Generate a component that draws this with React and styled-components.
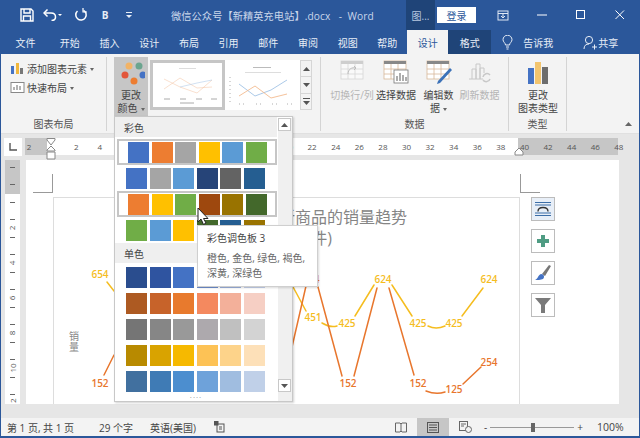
import React from 'react'
import styled, { createGlobalStyle } from 'styled-components'

const FONT = `"Open Sans", "Noto Sans CJK SC", sans-serif`
const BLUE = '#2b579a'

const Global = createGlobalStyle`
  html, body { margin: 0; padding: 0; background: #e6e6e6; }
  * { box-sizing: border-box; }
`

const SCHEMES = [
  ['#4472c4', '#ed7d31', '#a5a5a5', '#ffc000', '#5b9bd5', '#70ad47'],
  ['#4472c4', '#a5a5a5', '#5b9bd5', '#264478', '#636363', '#255e91'],
  ['#ed7d31', '#ffc000', '#70ad47', '#9e480e', '#997300', '#43682b'],
  ['#70ad47', '#5b9bd5', '#ffc000', '#43682b', '#255e91', '#997300'],
]
const MONO = [
  ['#2a4d8e', '#2f54a0', '#4472c4', '#6f8fd0', '#9db2de', '#c5d1ec'],
  ['#ad5a22', '#c7632a', '#e87a2d', '#f4895f', '#f3b09a', '#f6cfc4'],
  ['#757575', '#868686', '#999999', '#ada9ad', '#c0c0c0', '#d3d3d3'],
  ['#b88a00', '#d9a300', '#f6b900', '#fdc255', '#fdd38a', '#fde0b8'],
  ['#41709f', '#3f7bb5', '#4c8ecf', '#6ea2da', '#a0bde0', '#c0d0e8'],
]
const TABS = ['开始', '插入', '设计', '布局', '引用', '邮件', '审阅', '视图', '帮助']
const RULER = ['2', '', '2', '4', '6', '8', '10', '12', '14', '16', '18', '20', '22', '24', '26', '28', '30', '32', '34', '36', '38', '40', '42', '44', '46', '48']
const V_RULER = ['', '', '2', '4', '6', '8', '10', '12']

const YELLOW = '#f5bd1f'
const ORANGE = '#e8762d'
const LABELS = [
  [100, 278, '654', YELLOW], [313, 321, '451', YELLOW], [347, 327, '425', YELLOW], [383, 283, '624', YELLOW],
  [418, 327, '425', YELLOW], [454, 327, '425', YELLOW], [489, 283, '624', YELLOW],
  [100, 387, '152', ORANGE], [311, 283, '624', ORANGE], [348, 387, '152', ORANGE], [418, 387, '152', ORANGE],
  [454, 393, '125', ORANGE], [489, 366, '254', ORANGE],
]
const YELLOW_LINES = [
  'M107 282L114 291', 'M292 285L306 311', 'M322 323Q330 328 337 326', 'M355 316L374 285',
  'M392 285L412 316', 'M428 326Q436 330 445 326', 'M462 316L483 288',
]
const ORANGE_LINES = [
  'M104 375L114 355', 'M292 347L306 286', 'M318 287L342 376', 'M354 376L377 288',
  'M389 288L414 375', 'M426 391Q436 395 445 392', 'M463 384L481 367',
]

const Window = styled.div`
  position: relative;
  width: 640px;
  height: 438px;
  overflow: hidden;
  display: flex;
  flex-direction: column;
  background: #e6e6e6;
  border-left: 1px solid ${BLUE};
  border-right: 1px solid ${BLUE};
  border-bottom: 2px solid ${BLUE};
  font-family: ${FONT};
  font-size: 10px;
  color: #444;
`
const TitleBar = styled.div`
  height: 30px;
  flex: none;
  display: flex;
  align-items: center;
  background: ${BLUE};
  color: #e8eef7;
`
const Quick = styled.div`
  width: ${p => p.$w}px;
  height: 30px;
  flex: none;
  display: flex;
  align-items: center;
  justify-content: center;
  font-weight: 700;
`
const QuickRow = styled.div`
  display: flex;
  padding-left: 14px;
  width: 170px;
`
const DocName = styled.div`
  width: 235px;
  font-size: 10.2px;
  letter-spacing: 0.1px;
  white-space: pre;
  color: #c9d6ea;
`
const ContextTab = styled.div`
  width: 29px;
  height: 30px;
  background: #1f4478;
  display: flex;
  align-items: center;
  justify-content: center;
  color: #b8c8e0;
`
const Login = styled.div`
  margin-left: 2px;
  width: 39px;
  height: 16px;
  background: #fff;
  color: ${BLUE};
  display: flex;
  align-items: center;
  justify-content: center;
`
const Controls = styled.div`
  display: flex;
  margin-left: 7px;
`
const Control = styled.div`
  width: 39px;
  height: 30px;
  display: flex;
  align-items: center;
  justify-content: center;
`
const TabBar = styled.div`
  height: 24px;
  flex: none;
  display: flex;
  background: ${BLUE};
  color: #e8eef7;
`
const Tab = styled.div`
  width: ${p => p.$w || 39.7}px;
  display: flex;
  align-items: center;
  justify-content: center;
  background: ${p => (p.$active ? '#f3f3f3' : p.$dark ? '#1f4478' : 'transparent')};
  color: ${p => (p.$active ? BLUE : 'inherit')};
`
const TabTool = styled.div`
  display: flex;
  align-items: center;
  gap: ${p => p.$gap || 6}px;
  margin-left: ${p => p.$left}px;
`
const Ribbon = styled.div`
  height: 80px;
  flex: none;
  display: flex;
  background: #f3f3f3;
  padding-top: 3px;
  padding-bottom: 2px;
  border-bottom: 1px solid #e0e0e0;
  position: relative;
`
const Group = styled.div`
  width: ${p => p.$w}px;
  flex: none;
  display: flex;
  flex-direction: column;
  border-right: 1px solid #d4d4d4;
`
const GroupBody = styled.div`
  flex: 1;
  display: flex;
  align-items: flex-start;
  padding-left: ${p => p.$pad || 0}px;
`
const GroupLabel = styled.div`
  height: 14px;
  text-align: center;
  line-height: 14px;
  color: #555;
`
const SmallList = styled.div`
  display: flex;
  flex-direction: column;
  gap: 3px;
  padding: 3px 0 0 9px;
`
const SmallBtn = styled.div`
  height: 16px;
  display: flex;
  align-items: center;
  gap: 2px;
  white-space: nowrap;
`
const Caret = styled.span`
  display: inline-block;
  width: 0;
  height: 0;
  margin-left: 3px;
  vertical-align: middle;
  border-left: 2.5px solid transparent;
  border-right: 2.5px solid transparent;
  border-top: 3px solid #666;
`
const BigBtn = styled.div`
  width: ${p => p.$w}px;
  height: ${p => p.$h || 58}px;
  flex: none;
  display: flex;
  flex-direction: column;
  align-items: center;
  padding-top: ${p => p.$top || 3}px;
  background: ${p => (p.$on ? '#c6c6c6' : 'transparent')};
  color: ${p => (p.$off ? '#b5b5b5' : 'inherit')};
  line-height: 13px;
  text-align: center;
`
const BigText = styled.div`
  margin-top: ${p => p.$top ?? 5}px;
  white-space: nowrap;
`
const Gallery = styled.div`
  display: flex;
  height: 50px;
  margin: 3px 0 0 2px;
  background: #fff;
`
const Thumb = styled.div`
  width: ${p => p.$w}px;
  height: 50px;
  border: ${p => (p.$on ? '3px solid #c6c6c6' : 'none')};
  background: #fff;
`
const GalleryScroll = styled.div`
  width: 12px;
  display: flex;
  flex-direction: column;
  border: 1px solid #d6d6d6;
  background: #f3f3f3;
`
const ScrollCell = styled.div`
  flex: 1;
  display: flex;
  align-items: center;
  justify-content: center;
  border-bottom: ${p => (p.$last ? 'none' : '1px solid #d6d6d6')};
`
const Collapse = styled.div`
  position: absolute;
  right: 7px;
  bottom: 4px;
`
const RulerRow = styled.div`
  height: 26px;
  flex: none;
  display: flex;
  padding: 4px 0 0 3px;
  background: #e6e6e6;
`
const Corner = styled.div`
  width: 18px;
  height: 18px;
  background: #fff;
  display: flex;
  align-items: center;
  justify-content: center;
`
const Ruler = styled.div`
  position: relative;
  margin-left: 3px;
  width: 593px;
  height: 17px;
  display: flex;
  background: linear-gradient(to right, #c6c6c6 0 22px, #fff 22px 493px, #c6c6c6 493px);
`
const RulerNum = styled.div`
  width: 23.6px;
  flex: none;
  text-align: center;
  font-size: 8px;
  line-height: 17px;
  color: #555;
  &:first-child { margin-left: -7.8px; }
`
const Marker = styled.div`
  position: absolute;
  left: ${p => p.$x}px;
  top: 0;
`
const DocRow = styled.div`
  height: 244px;
  flex: none;
  display: flex;
  padding-left: 4px;
`
const VRuler = styled.div`
  width: 15px;
  flex: none;
  overflow: hidden;
  background: linear-gradient(to bottom, #c6c6c6 0 34px, #fff 34px);
`
const VCell = styled.div`
  height: 35px;
  display: flex;
  flex-direction: column;
  align-items: center;
  justify-content: space-between;
  padding: 8px 0;
  font-size: 8px;
  line-height: 8px;
  color: #555;
  &:first-child { margin-top: -19.5px; }
`
const Tick = styled.i`
  width: 5px;
  height: 1px;
  background: #666;
`
const VNum = styled.span`
  height: 8px;
  transform: rotate(-90deg);
`
const Page = styled.div`
  width: 593px;
  flex: none;
  margin-left: 6px;
  background: #fff;
`
const PageHead = styled.div`
  height: 33px;
  width: 514px;
  padding: 14px 0 0 7px;
  display: flex;
  justify-content: space-between;
`
const Crop = styled.div`
  width: 20px;
  height: 19px;
  border-bottom: 1px solid #999;
  border-${p => p.$side}: 1px solid #999;
`
const PageBody = styled.div`
  display: flex;
  margin: 4px 0 0 27px;
  gap: 11px;
`
const ChartFrame = styled.div`
  width: 467px;
  height: 207px;
  flex: none;
  border: 1px solid #ddd;
  border-bottom: none;
  overflow: hidden;
`
const ChartSvg = styled.svg`
  display: block;
  margin: -1px;
`
const SideTools = styled.div`
  display: flex;
  flex-direction: column;
  gap: 8px;
`
const SideBtn = styled.div`
  width: 24px;
  height: 24px;
  border: 1px solid #bcbcbc;
  display: flex;
  align-items: center;
  justify-content: center;
  background: ${p => p.$tint || '#fff'};
`
const Spacer = styled.div`
  height: 14px;
  flex: none;
`
const StatusBar = styled.div`
  height: 18px;
  flex: none;
  display: flex;
  align-items: center;
  padding-left: 6px;
  background: #f3f3f3;
  color: #444;
  font-size: 10px;
`
const StatusText = styled.span`
  width: ${p => p.$w}px;
  flex: none;
  white-space: nowrap;
`
const ViewBtn = styled.div`
  width: ${p => p.$w}px;
  height: 18px;
  margin-left: ${p => p.$left || 0}px;
  flex: none;
  display: flex;
  align-items: center;
  justify-content: center;
  background: ${p => (p.$on ? '#c6c6c6' : 'transparent')};
`
const Zoom = styled.div`
  margin-left: 12px;
  display: flex;
  align-items: center;
  gap: 3px;
  color: #444;
`
const Slider = styled.div`
  position: relative;
  width: 84px;
  height: 1px;
  background: #999;
`
const Thumbler = styled.i`
  position: absolute;
  left: 41px;
  top: -4px;
  width: 4px;
  height: 9px;
  background: #666;
`
const Percent = styled.span`
  margin-left: 11px;
  font-size: 10.5px;
`
const Drop = styled.div`
  position: absolute;
  left: 113px;
  top: 116px;
  width: 179px;
  height: 286px;
  display: flex;
  background: #fff;
  border: 1px solid #c8c8c8;
  box-shadow: 1px 1px 2px rgba(0, 0, 0, 0.18);
`
const DropMain = styled.div`
  width: 162px;
  flex: none;
  display: flex;
  flex-direction: column;
`
const DropHead = styled.div`
  height: ${p => p.$h}px;
  flex: none;
  display: flex;
  align-items: center;
  padding-left: 9px;
  background: #efefef;
  margin-bottom: ${p => p.$gap}px;
`
const Swatches = styled.div`
  height: 26px;
  flex: none;
  display: flex;
  align-items: center;
  gap: 2.6px;
  border: ${p => (p.$on ? '2px solid #c6c6c6' : 'none')};
  margin-left: ${p => (p.$on ? '2px' : '0')};
  padding-left: ${p => (p.$on ? '9px' : '11px')};
`
const Swatch = styled.i`
  width: 21px;
  height: 21px;
  flex: none;
  background: ${p => p.$c};
`
const Grip = styled.div`
  text-align: center;
  font-size: 8px;
  line-height: 5px;
  letter-spacing: 1px;
  color: #888;
`
const DropScroll = styled.div`
  flex: 1;
  margin: 1px 0 0 1px;
  display: flex;
  flex-direction: column;
  justify-content: space-between;
  background: #f0f0f0;
`
const ScrollBtn = styled.div`
  width: 13px;
  height: 13px;
  background: #fff;
  border: 1px solid #c8c8c8;
  display: flex;
  align-items: center;
  justify-content: center;
  margin-bottom: ${p => p.$bottom || 0}px;
`
const Tip = styled.div`
  position: absolute;
  left: 196px;
  top: 225px;
  width: 121px;
  height: 62px;
  padding: 5px 9px;
  background: #fff;
  border: 1px solid #cfcfcf;
  box-shadow: 1px 1px 2px rgba(0, 0, 0, 0.15);
  color: #666;
  line-height: 15px;
`
const TipTitle = styled.div`
  margin-bottom: 5px;
  color: #444;
`
const Pointer = styled.svg`
  position: absolute;
  left: 196px;
  top: 208px;
`

const Arrow = ({ dir = 'down', c = '#555' }) => (
  <svg width="7" height="4" viewBox="0 0 7 4">
    <path d={dir === 'up' ? 'M0 4L3.5 0L7 4Z' : 'M0 0L7 0L3.5 4Z'} fill={c} />
  </svg>
)

const CellTable = ({ children }) => (
  <svg width="26" height="24" viewBox="0 0 26 24">{children}</svg>
)

const Grid = ({ x = 1, y = 1, w = 22, h = 18, head = '#888', line = '#d8b89a' }) => (
  <g fill="none" stroke={line} strokeWidth="0.8">
    <rect x={x} y={y} width={w} height={h} fill="#fff" />
    <rect x={x} y={y} width={w} height="3" fill={head} stroke="none" />
    <path d={`M${x} ${y + 8}h${w}M${x} ${y + 13}h${w}M${x + 7} ${y + 3}v${h - 3}M${x + 14} ${y + 3}v${h - 3}`} />
  </g>
)

const Thumb1 = () => (
  <svg width="69" height="44" viewBox="0 0 69 44">
    <rect x="26" y="5" width="17" height="1" fill="#ddd" />
    <g fill="none" strokeWidth="0.7" strokeOpacity="0.75">
      <path d="M11 16L27 24L44 30L59 17" stroke="#f3c3a3" />
      <path d="M11 26L27 15L44 25L59 24" stroke="#f3c3a3" />
      <path d="M27 24L44 20L59 17" stroke="#a9c6e6" />
    </g>
    <path d="M11 36h6M27 36h6M43 36h6M58 36h6M27 40h14" stroke="#aaa" strokeWidth="1" />
  </svg>
)
const Thumb2 = () => (
  <svg width="75" height="50" viewBox="0 0 75 50">
    <rect x="28" y="7" width="18" height="1" fill="#bbb" />
    <rect x="20" y="12" width="36" height="1" fill="#ddd" />
    <g fill="none" strokeWidth="1" strokeOpacity="0.85">
      <path d="M14 24L30 36L46 30L62 20" stroke="#9cc0e4" />
      <path d="M14 36L30 26L46 38L62 34" stroke="#f3b78a" />
    </g>
    <path d="M5 17v26M14 44h5M31 44h5M47 44h5M62 44h5" stroke="#999" strokeWidth="0.8" strokeDasharray="1 3" />
  </svg>
)

export default function App() {
  return (
    <>
      <Global />
      <Window>
        <TitleBar>
          <QuickRow>
            <Quick $w={24}>
              <svg width="14" height="14" viewBox="0 0 14 14" fill="none" stroke="#fff" strokeWidth="1.4">
                <path d="M1 1H11L13 3V13H1Z" />
                <path d="M4 1V5H10V1M3.5 13V8H10.5V13" />
              </svg>
            </Quick>
            <Quick $w={28}>
              <svg width="20" height="12" viewBox="0 0 20 12" fill="none" stroke="#fff" strokeWidth="1.5">
                <path d="M1 4H8C11 4 12.5 6 12.5 8S11 11.5 8.5 11.5" />
                <path d="M4.5 0.5L1 4L4.5 7.5" />
                <path d="M15 5H19L17 7Z" fill="#fff" stroke="none" />
              </svg>
            </Quick>
            <Quick $w={28}>
              <svg width="14" height="14" viewBox="0 0 14 14" fill="none" stroke="#fff" strokeWidth="1.5">
                <path d="M9.5 2.3A5.2 5.2 0 1 1 3.5 3" />
                <path d="M9 0V4H13" strokeWidth="1.2" />
              </svg>
            </Quick>
            <Quick $w={20}>B</Quick>
            <Quick $w={28}>
              <svg width="8" height="8" viewBox="0 0 8 8" fill="#e8eef7">
                <rect x="1" y="1" width="6" height="1" />
                <path d="M1 4H7L4 7Z" />
              </svg>
            </Quick>
          </QuickRow>
          <DocName>{'微信公众号【新精英充电站】.docx   -  Word'}</DocName>
          <ContextTab>图...</ContextTab>
          <Login>登录</Login>
          <Controls>
            <Control>
              <svg width="12" height="11" viewBox="0 0 12 11" fill="none" stroke="#dfe7f3">
                <rect x="1" y="1" width="10" height="9" />
                <path d="M1 3.5H11M6 3.5V7M4 6L6 8L8 6" />
              </svg>
            </Control>
            <Control>
              <svg width="10" height="2"><rect width="10" height="1" y="0.5" fill="#fff" /></svg>
            </Control>
            <Control>
              <svg width="10" height="10" fill="none" stroke="#fff"><rect x="0.5" y="0.5" width="8" height="8" /></svg>
            </Control>
            <Control>
              <svg width="10" height="10" stroke="#fff"><path d="M0.5 0.5L9 9M9 0.5L0.5 9" /></svg>
            </Control>
          </Controls>
        </TitleBar>

        <TabBar>
          <Tab $w={49}>文件</Tab>
          {TABS.map((t, i) => <Tab key={i}>{t}</Tab>)}
          <Tab $w={41} $active>设计</Tab>
          <Tab $w={43} $dark>格式</Tab>
          <TabTool $left={11} $gap={10}>
            <svg width="11" height="15" viewBox="0 0 11 15" fill="none" stroke="#e8eef7">
              <path d="M3.5 10C3.5 8 1 7 1 4.7A4.5 4.5 0 0 1 10 4.7C10 7 7.5 8 7.5 10ZM4 12H7M4.5 14H6.5" />
            </svg>
            告诉我
          </TabTool>
          <TabTool $left={30} $gap={1}>
            <svg width="14" height="15" viewBox="0 0 14 15" fill="none" stroke="#e8eef7">
              <circle cx="6" cy="5" r="3.6" />
              <path d="M1 14C1 10.5 3 9 6 9M9 12H14M11.5 9.5V14.5" />
            </svg>
            共享
          </TabTool>
        </TabBar>

        <Ribbon>
          <Group $w={106}>
            <GroupBody>
              <SmallList>
                <SmallBtn>
                  <svg width="15" height="13" viewBox="0 0 15 13">
                    <rect x="1" y="4" width="3" height="8" fill="#4472c4" />
                    <rect x="6" y="1" width="3" height="11" fill="#f0b73e" />
                    <rect x="10" y="6" width="3" height="6" fill="#777" />
                  </svg>
                  <span>添加图表元素<Caret /></span>
                </SmallBtn>
                <SmallBtn>
                  <svg width="15" height="13" viewBox="0 0 15 13" fill="none" stroke="#888">
                    <rect x="1" y="1.5" width="13" height="10" fill="#fff" />
                    <path d="M4 9V6M7 9V4M10 9V5" stroke="#666" />
                  </svg>
                  <span>快速布局<Caret /></span>
                </SmallBtn>
              </SmallList>
            </GroupBody>
            <GroupLabel>图表布局</GroupLabel>
          </Group>
          <Group $w={214}>
            <GroupBody $pad={7}>
              <BigBtn $w={34} $h={59} $on $top={4}>
                <svg width="28" height="28" viewBox="0 0 28 28">
                  <circle cx="12" cy="5" r="3.5" fill="#f2b366" />
                  <circle cx="22" cy="5" r="3.5" fill="#6ba58f" />
                  <circle cx="8" cy="14" r="3.5" fill="#e2553a" />
                  <circle cx="26" cy="14" r="3.5" fill="#4472c4" />
                  <circle cx="17" cy="20" r="3.5" fill="#ed7d31" />
                </svg>
                <BigText $top={0}>更改<br />颜色<Caret /></BigText>
              </BigBtn>
              <Gallery>
                <Thumb $w={75} $on><Thumb1 /></Thumb>
                <Thumb $w={75}><Thumb2 /></Thumb>
                <GalleryScroll>
                  <ScrollCell><Arrow dir="up" /></ScrollCell>
                  <ScrollCell><Arrow /></ScrollCell>
                  <ScrollCell $last>
                    <svg width="7" height="7" viewBox="0 0 7 7" fill="#555">
                      <rect width="7" height="1" />
                      <path d="M0 3H7L3.5 7Z" />
                    </svg>
                  </ScrollCell>
                </GalleryScroll>
              </Gallery>
            </GroupBody>
            <GroupLabel>图表样式</GroupLabel>
          </Group>
          <Group $w={188}>
            <GroupBody $pad={9}>
              <BigBtn $w={44} $off>
                <CellTable>
                  <g opacity="0.5">
                    <Grid head="#aaa" line="#bbb" x={2} />
                    <path d="M9 14C9 9 13 7 17 8M15 6L17 8L15 10" fill="none" stroke="#888" />
                  </g>
                </CellTable>
                <BigText>切换行/列</BigText>
              </BigBtn>
              <BigBtn $w={44}>
                <CellTable>
                  <Grid x={1} w={22} />
                  <rect x="11" y="10" width="14" height="13" fill="#fff" stroke="#777" strokeWidth="0.8" />
                  <path d="M14 21V16M17 21V13M20 21V15M23 21V17" stroke="#777" strokeWidth="1.2" />
                </CellTable>
                <BigText>选择数据</BigText>
              </BigBtn>
              <BigBtn $w={41}>
                <CellTable>
                  <Grid x={1} w={22} />
                  <path d="M12 21L24 8L26 10L14 23L11 24Z" fill="#3c72b8" />
                </CellTable>
                <BigText>编辑数<br />据<Caret /></BigText>
              </BigBtn>
              <BigBtn $w={41} $off>
                <CellTable>
                  <g fill="none" stroke="#c8c8c8">
                    <path d="M5 19V9H9V19M9 19V4H13V19M13 19V8H17V13M2 19H16" />
                    <path d="M16 17A4 4 0 0 1 23 15M23 19A4 4 0 0 1 16 20" strokeWidth="1.5" />
                  </g>
                </CellTable>
                <BigText>刷新数据</BigText>
              </BigBtn>
            </GroupBody>
            <GroupLabel>数据</GroupLabel>
          </Group>
          <Group $w={58}>
            <GroupBody>
              <BigBtn $w={58} $top={5}>
                <svg width="22" height="24" viewBox="0 0 22 24">
                  <rect x="1" y="6" width="6" height="16" fill="#4472c4" />
                  <rect x="8" y="0" width="6" height="22" fill="#f2c46e" />
                  <rect x="15" y="5" width="6" height="17" fill="#6d6d6d" />
                </svg>
                <BigText $top={3}>更改<br />图表类型</BigText>
              </BigBtn>
            </GroupBody>
            <GroupLabel>类型</GroupLabel>
          </Group>
          <Collapse><Arrow dir="up" c="#666" /></Collapse>
        </Ribbon>

        <RulerRow>
          <Corner>
            <svg width="8" height="8" fill="none" stroke="#555" strokeWidth="1.4"><path d="M1 0V7H8" /></svg>
          </Corner>
          <Ruler>
            {RULER.map((n, i) => <RulerNum key={i}>{n}</RulerNum>)}
            <Marker $x={21}>
              <svg width="10" height="22" viewBox="0 0 10 22" fill="#fff" stroke="#888">
                <path d="M1 0.5H9V2L5 7L1 2ZM5 8L9 12V13H1V12ZM1 14H9V21H1Z" />
              </svg>
            </Marker>
            <Marker $x={489}>
              <svg width="10" height="22" viewBox="0 0 10 22" fill="#fff" stroke="#888">
                <path d="M5 10L9 14V17H1V14Z" />
              </svg>
            </Marker>
          </Ruler>
        </RulerRow>

        <DocRow>
          <VRuler>
            {V_RULER.map((n, i) => (
              <VCell key={i}>
                <Tick />
                {n && <VNum>{n}</VNum>}
                <Tick />
              </VCell>
            ))}
          </VRuler>
          <Page>
            <PageHead>
              <Crop $side="right" />
              <Crop $side="left" />
            </PageHead>
            <PageBody>
              <ChartFrame>
                <ChartSvg width="467" height="207" viewBox="53 197 467 207" fontFamily={FONT}>
                  <text x="407" y="223" textAnchor="end" fontSize="16" fill="#858585">新商品的销量趋势</text>
                  <text x="332" y="244" textAnchor="end" fontSize="16" fill="#858585">(件)</text>
                  <text textAnchor="middle" fontSize="10" fill="#888">
                    <tspan x="74" y="340">销</tspan>
                    <tspan x="74" dy="10.500">量</tspan>
                  </text>
                  <g fill="none" strokeWidth="1.5" strokeLinecap="round">
                    {YELLOW_LINES.map((d, i) => <path key={i} d={d} stroke={YELLOW} />)}
                    {ORANGE_LINES.map((d, i) => <path key={i} d={d} stroke={ORANGE} />)}
                  </g>
                  <g fontSize="10" fontWeight="600" textAnchor="middle">
                    {LABELS.map(([x, y, t, c], i) => <text key={i} x={x} y={y} fill={c}>{t}</text>)}
                  </g>
                </ChartSvg>
              </ChartFrame>
              <SideTools>
                <SideBtn $tint="#e8eff8">
                  <svg width="18" height="16" viewBox="0 0 18 16" fill="none" stroke="#3c6ea8">
                    <path d="M1 1.5H17M1 4H17M1 12H17M1 14.500H17" />
                    <path d="M4 10.500C4 7 6 6.500 9 6.500S14 7 14 10.500" stroke="#333" strokeWidth="1.4" />
                  </svg>
                </SideBtn>
                <SideBtn>
                  <svg width="12" height="12" viewBox="0 0 12 12" fill="#4f9c83">
                    <path d="M4 0H8V4H12V8H8V12H4V8H0V4H4Z" />
                  </svg>
                </SideBtn>
                <SideBtn>
                  <svg width="18" height="18" viewBox="0 0 18 18">
                    <path d="M8 10L15 1L17 2L11 12Z" fill="#777" />
                    <path d="M7 10C10 10 11 13 9 15C7 16 3 16 1 16C4 15 4 11 7 10Z" fill="#4472c4" />
                  </svg>
                </SideBtn>
                <SideBtn>
                  <svg width="16" height="15" viewBox="0 0 16 15" fill="#7a7a7a">
                    <path d="M0 0H16L10 7V15H6V7Z" />
                  </svg>
                </SideBtn>
              </SideTools>
            </PageBody>
          </Page>
        </DocRow>
        <Spacer />

        <StatusBar>
          <StatusText $w={92}>第 1 页, 共 1 页</StatusText>
          <StatusText $w={51}>29 个字</StatusText>
          <StatusText $w={64}>英语(美国)</StatusText>
          <svg width="11" height="12" viewBox="0 0 11 12" fill="none" stroke="#555">
            <rect x="3" y="3" width="7" height="8" />
            <rect x="0" y="0" width="4" height="4" fill="#555" />
            <path d="M5 6H8M5 8H8" />
          </svg>
          <ViewBtn $w={12} $left={170}>
            <svg width="12" height="11" viewBox="0 0 12 11" fill="none" stroke="#666">
              <path d="M0.5 1H5L6 2L7 1H11.5V10H7L6 9L5 10H0.5ZM6 2V9" />
            </svg>
          </ViewBtn>
          <ViewBtn $w={32} $left={10} $on>
            <svg width="12" height="11" viewBox="0 0 12 11" fill="none" stroke="#555">
              <rect x="0.5" y="0.5" width="11" height="10" />
              <path d="M2 3H10M2 5.500H10M2 8H10" />
            </svg>
          </ViewBtn>
          <ViewBtn $w={14} $left={9}>
            <svg width="13" height="12" viewBox="0 0 13 12" fill="none" stroke="#666">
              <rect x="0.5" y="0.5" width="8" height="9" />
              <path d="M2 3H7M2 5H5" />
              <circle cx="9.500" cy="8.500" r="3" fill="#f3f3f3" />
            </svg>
          </ViewBtn>
          <Zoom>
            <span>-</span>
            <Slider><Thumbler /></Slider>
            <span>+</span>
            <Percent>100%</Percent>
          </Zoom>
        </StatusBar>

        <Drop>
          <DropMain>
            <DropHead $h={20} $gap={2}>彩色</DropHead>
            {SCHEMES.map((row, i) => (
              <Swatches key={i} $on={i === 0 || i === 2}>
                {row.map((c, j) => <Swatch key={j} $c={c} />)}
              </Swatches>
            ))}
            <DropHead $h={20} $gap={1}>单色</DropHead>
            {MONO.map((row, i) => (
              <Swatches key={i}>
                {row.map((c, j) => <Swatch key={j} $c={c} />)}
              </Swatches>
            ))}
            <Grip>····</Grip>
          </DropMain>
          <DropScroll>
            <ScrollBtn><Arrow dir="up" /></ScrollBtn>
            <ScrollBtn $bottom={9}><Arrow /></ScrollBtn>
          </DropScroll>
        </Drop>

        <Pointer width="12" height="18" viewBox="0 0 12 18">
          <path d="M1 0V14L4 11L6.500 16.500L9 15L6.500 10.500H11Z" fill="#fff" stroke="#222" strokeWidth="1" />
        </Pointer>

        <Tip>
          <TipTitle>彩色调色板 3</TipTitle>
          橙色, 金色, 绿色, 褐色,<br />深黄, 深绿色
        </Tip>
      </Window>
    </>
  )
}
